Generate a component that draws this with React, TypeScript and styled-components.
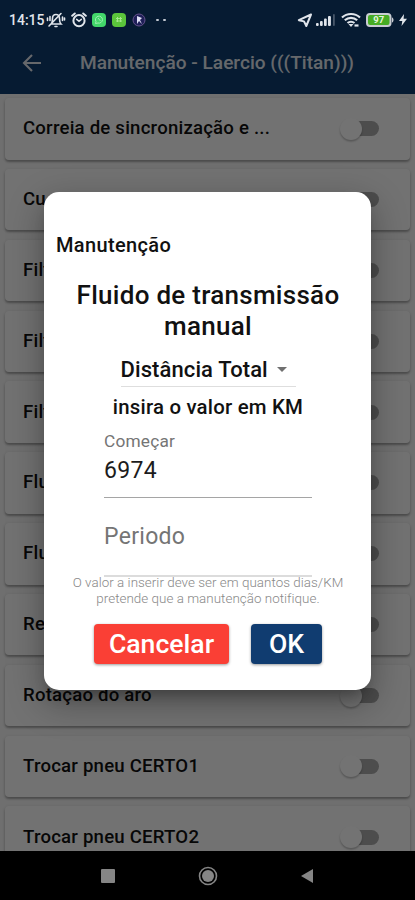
import React from "react";
import styled, { createGlobalStyle } from "styled-components";

const GlobalStyle = createGlobalStyle`
  * { box-sizing: border-box; }
  html, body { margin: 0; padding: 0; overflow: hidden; }
  body { font-family: Roboto, "Liberation Sans", sans-serif; }
`;

const Screen = styled.div`
  position: relative;
  display: flex;
  flex-direction: column;
  width: 415px;
  height: 900px;
  overflow: hidden;
  background: #0e3b6e;
`;

const StatusBar = styled.header`
  position: relative;
  z-index: 2;
  flex: none;
  display: flex;
  align-items: center;
  justify-content: space-between;
  height: 40px;
  padding: 0 8px 0 9px;
  color: #e0e5eb;
`;

const StatusGroup = styled.div<{ $gap: number }>`
  display: flex;
  align-items: center;
  gap: ${(p) => p.$gap}px;
  svg { display: block; flex: none; }
`;

const Clock = styled.span`
  width: 35px;
  font-size: 14px;
  font-weight: 500;
  white-space: nowrap;
  line-height: 20px;
`;

const AppIcon = styled.span<{ $color: string }>`
  display: grid;
  place-items: center;
  width: 14px;
  height: 14px;
  margin-right: 1px;
  border-radius: 4px;
  background: ${(p) => p.$color};
`;

const Dots = styled.span`
  display: flex;
  gap: 4px;
  margin-left: 5px;
  &::before, &::after {
    content: "";
    width: 3px;
    height: 2px;
    border-radius: 1px;
    background: #c3c9d2;
  }
`;

const AppBar = styled.div`
  flex: none;
  display: flex;
  align-items: center;
  height: 53.5px;
  padding: 0 0 8px 22px;
  color: #dfe3ea;
`;

const AppTitle = styled.h1`
  margin: 0 0 0 38px;
  font-size: 19.1px;
  font-weight: 500;
  line-height: 26px;
  white-space: nowrap;
`;

const List = styled.main`
  flex: 1;
  min-height: 0;
  display: flex;
  flex-direction: column;
  gap: 9.35px;
  padding: 4.5px 5px 0 5px;
  background: #f2f2f2;
  overflow: hidden;
`;

const Card = styled.section`
  flex: none;
  display: flex;
  align-items: center;
  justify-content: space-between;
  height: 61.5px;
  padding: 0 31px 1px 18px;
  border-radius: 4px;
  background: #f9f9f9;
  box-shadow: 0 2px 2px rgba(0, 0, 0, 0.26), 0 1px 4px rgba(0, 0, 0, 0.12);
`;

const CardTitle = styled.span`
  font-size: 18.6px;
  font-weight: 500;
  line-height: 24px;
  letter-spacing: 0.21px;
  white-space: nowrap;
  color: #111;
`;

const SwitchTrack = styled.span`
  display: flex;
  align-items: center;
  width: 36px;
  height: 15px;
  margin-top: 1px;
  border-radius: 8px;
  background: #a8a8a8;
`;

const SwitchThumb = styled.span`
  width: 22px;
  height: 22px;
  margin-left: -3px;
  border-radius: 50%;
  background: #fafafa;
  box-shadow: 0 1.5px 2px rgba(0, 0, 0, 0.26);
`;

const NavBar = styled.nav`
  position: relative;
  z-index: 2;
  flex: none;
  display: flex;
  align-items: center;
  justify-content: space-between;
  height: 49px;
  padding: 0 102px 0 101px;
  background: #000;
  svg { display: block; }
`;

const Scrim = styled.div`
  position: absolute;
  inset: 0;
  z-index: 1;
  display: flex;
  flex-direction: column;
  align-items: center;
  padding-top: 191.5px;
  background: rgba(0, 0, 0, 0.54);
`;

const Dialog = styled.section`
  display: flex;
  flex-direction: column;
  align-items: center;
  width: 327px;
  height: 498.5px;
  padding: 40px 11px 0 12px;
  border-radius: 15px;
  background: #fff;
  box-shadow: 0 11px 15px -7px rgba(0, 0, 0, 0.3), 0 12px 34px 3px rgba(0, 0, 0, 0.28);
  color: #111;
`;

const DialogLabel = styled.h2`
  align-self: flex-start;
  margin: 0;
  font-size: 20px;
  font-weight: 500;
  line-height: 26px;
  letter-spacing: 0.36px;
`;

const DialogTitle = styled.h3`
  width: 290px;
  margin: 22px 0 0;
  font-size: 26px;
  font-weight: 500;
  line-height: 31px;
  text-align: center;
  letter-spacing: 0.28px;
`;

const Dropdown = styled.button`
  display: flex;
  align-items: center;
  justify-content: space-between;
  width: 175px;
  height: 33px;
  margin-top: 12px;
  padding: 0 9px 0 0;
  border: 0;
  border-bottom: 1px solid #dedede;
  background: transparent;
  color: #111;
  font: 500 22px/28px Roboto, sans-serif;
  letter-spacing: 0.1px;
  white-space: nowrap;
`;

const Instruction = styled.p`
  margin: 7px 0 0;
  font-size: 20.4px;
  font-weight: 500;
  line-height: 26px;
  letter-spacing: 0.2px;
`;

const Field = styled.label<{ $line: string; $height: number }>`
  display: flex;
  flex-direction: column;
  width: 208px;
  height: ${(p) => p.$height}px;
  border-bottom: ${(p) => p.$line};
`;

const FieldLabel = styled.span`
  margin-top: 10px;
  font-size: 17.3px;
  line-height: 22px;
  letter-spacing: 0.2px;
  color: #757575;
`;

const FieldValue = styled.span`
  margin-top: 5px;
  font-size: 23px;
  line-height: 28px;
  letter-spacing: 0.3px;
  color: #1c1c1c;
`;

const FieldPlaceholder = styled.span`
  margin-top: 25px;
  font-size: 23px;
  line-height: 28px;
  letter-spacing: 0.3px;
  color: #757575;
`;

const Hint = styled.p`
  width: 300px;
  margin: -1.5px 0 0;
  font-size: 13.4px;
  font-weight: 300;
  line-height: 15.5px;
  letter-spacing: 0.03px;
  text-align: center;
  color: #888;
`;

const Actions = styled.div`
  display: flex;
  gap: 22px;
  margin-top: 17.5px;
`;

const ActionButton = styled.button<{ $color: string; $width: number }>`
  width: ${(p) => p.$width}px;
  height: 40px;
  padding: 0;
  border: 0;
  border-radius: 4px;
  background: ${(p) => p.$color};
  box-shadow: 0 1px 3px rgba(0, 0, 0, 0.4);
  color: #fff;
  font: 500 26.6px/38px Roboto, sans-serif;
`;

const items = [
  "Correia de sincronização e ...",
  "Cu",
  "Filt",
  "Filt",
  "Filt",
  "Flu",
  "Flu",
  "Re",
  "Rotação do aro",
  "Trocar pneu CERTO1",
  "Trocar pneu CERTO2",
];

const MutedBell = () => (
  <svg width="20" height="18" viewBox="0 0 20 18" fill="none" stroke="currentColor" strokeWidth="1.6" strokeLinecap="round">
    <path d="M5 13h10c-1.500-1.500-1.500-3-1.500-5.500C13.500 5 12 3.500 10 3.500S6.500 5 6.500 7.500C6.500 10 6.500 11.500 5 13zM9 15.500h2M3 15L15 2.500M1.500 7v2.500M4 5.500v4M16.500 6v3.500M18.500 7v2" />
  </svg>
);

const AlarmIcon = () => (
  <svg width="16" height="16" viewBox="0 0 16 16" fill="none" stroke="currentColor" strokeWidth="2" strokeLinecap="round">
    <circle cx="8" cy="8.700" r="5.600" />
    <path d="M1.200 3.800l2.600-2.300M14.800 3.800l-2.600-2.300" />
    <path d="M5.700 7.300L8 9.300l2.300-2" strokeWidth="1.600" />
  </svg>
);

const BrowserIcon = () => (
  <svg width="14" height="14" viewBox="0 0 14 14">
    <circle cx="7" cy="7" r="6" fill="#1f1f58" stroke="#66528c" />
    <path d="M5 3v8l2-3 3 3-2-4 2-2z" fill="#dfe0f5" />
  </svg>
);

const LocationIcon = () => (
  <svg width="16" height="15" viewBox="0 0 16 15" fill="none" stroke="currentColor" strokeWidth="2" strokeLinejoin="round">
    <path d="M14 1.500L1.800 7.200l5.200 1.200 2.300 4.600z" />
  </svg>
);

const SignalIcon = () => (
  <svg width="20" height="14" viewBox="0 0 20 14" fill="currentColor">
    <rect x="0" y="10" width="2.700" height="3" rx="1" />
    <rect x="4" y="8" width="2.700" height="5" rx="1" />
    <rect x="8" y="5.500" width="2.700" height="7.500" rx="1" />
    <rect x="12" y="3" width="2.900" height="10" rx="1" />
    <rect x="17" y="1" width="1.800" height="12" rx="1" opacity=".3" />
  </svg>
);

const WifiIcon = () => (
  <svg width="20" height="16" viewBox="0 0 20 16" fill="none" stroke="currentColor" strokeWidth="2.200">
    <path d="M1 5.500C6 .8 14 .8 19 5.500M3.800 8.300c3.600-3.200 8.800-3.200 12.400 0M6.500 11c2-1.700 5-1.700 7 0" />
    <path d="M7.500 12L10 15l2.500-3z" fill="currentColor" stroke="none" />
    <path d="M13.500 13.500h4" />
  </svg>
);

const BatteryIcon = () => (
  <svg width="28" height="14" viewBox="0 0 28 14">
    <rect x="1" y="1" width="23.500" height="12" rx="3" fill="#46ac24" stroke="#c8ccd2" strokeWidth="2" />
    <path d="M26 4.500c2 .5 2 4.500 0 5z" fill="#c8ccd2" />
    <text x="12.700" y="10.400" fill="#e4f6dd" fontFamily="Roboto" fontSize="9.500" fontWeight="700" textAnchor="middle">97</text>
  </svg>
);

const BoltIcon = () => (
  <svg width="8" height="12" viewBox="0 0 8 12" fill="currentColor">
    <path d="M5 0L0 7h3.300L2.500 12 8 4.700H4.600z" />
  </svg>
);

export default function App() {
  return (
    <>
      <GlobalStyle />
      <Screen>
        <StatusBar>
          <StatusGroup $gap={5}>
            <StatusGroup $gap={2}>
              <Clock>14:15</Clock>
              <MutedBell />
            </StatusGroup>
            <AlarmIcon />
            <AppIcon $color="#42d76a">
              <svg width="10" height="10" viewBox="0 0 10 10" fill="none" stroke="#a0efb1">
                <path d="M1.500 8.500l.5-2A3.500 3.500 0 1 1 4 8zM4 3l2.500 3" />
              </svg>
            </AppIcon>
            <AppIcon $color="#5bc53b">
              <svg width="10" height="10" viewBox="0 0 10 10" fill="none" stroke="#a4e78d">
                <path d="M2 3.500h6M2 6h6M3.500 2v5M6.500 2v5" />
              </svg>
            </AppIcon>
            <BrowserIcon />
            <Dots />
          </StatusGroup>
          <StatusGroup $gap={5}>
            <StatusGroup $gap={3}>
              <LocationIcon />
              <SignalIcon />
            </StatusGroup>
            <WifiIcon />
            <BatteryIcon />
            <BoltIcon />
          </StatusGroup>
        </StatusBar>
        <AppBar>
          <svg width="20" height="18" viewBox="0 0 20 18" fill="none" stroke="currentColor" strokeWidth="2.100">
            <path d="M19 9H2M10 1L2 9l8 8" />
          </svg>
          <AppTitle>Manutenção - Laercio (((Titan)))</AppTitle>
        </AppBar>
        <List>
          {items.map((item, index) => (
            <Card key={index}>
              <CardTitle>{item}</CardTitle>
              <SwitchTrack><SwitchThumb /></SwitchTrack>
            </Card>
          ))}
        </List>
        <NavBar>
          <svg width="14" height="14"><rect width="14" height="14" rx="1" fill="#858585" /></svg>
          <svg width="20" height="20" viewBox="0 0 20 20">
            <circle cx="10" cy="10" r="8.500" fill="none" stroke="#858585" strokeWidth="1.600" />
            <circle cx="10" cy="10" r="6" fill="#858585" />
          </svg>
          <svg width="12" height="14" viewBox="0 0 12 14"><path d="M0 7L12 0v14z" fill="#858585" /></svg>
        </NavBar>
        <Scrim>
          <Dialog role="dialog">
            <DialogLabel>Manutenção</DialogLabel>
            <DialogTitle>Fluido de transmissão<br />manual</DialogTitle>
            <Dropdown>
              Distância Total
              <svg width="10" height="5" viewBox="0 0 10 5"><path d="M0 0h10L5 5z" fill="#707070" /></svg>
            </Dropdown>
            <Instruction>insira o valor em KM</Instruction>
            <Field $line="1px solid #a5a5a5" $height={78}>
              <FieldLabel>Começar</FieldLabel>
              <FieldValue>6974</FieldValue>
            </Field>
            <Field $line="2px solid #dcdcdc" $height={79}>
              <FieldPlaceholder>Periodo</FieldPlaceholder>
            </Field>
            <Hint>O valor a inserir deve ser em quantos dias/KM<br />pretende que a manutenção notifique.</Hint>
            <Actions>
              <ActionButton $color="#fa3f35" $width={135}>Cancelar</ActionButton>
              <ActionButton $color="#103c70" $width={71}>OK</ActionButton>
            </Actions>
          </Dialog>
        </Scrim>
      </Screen>
    </>
  );
}
